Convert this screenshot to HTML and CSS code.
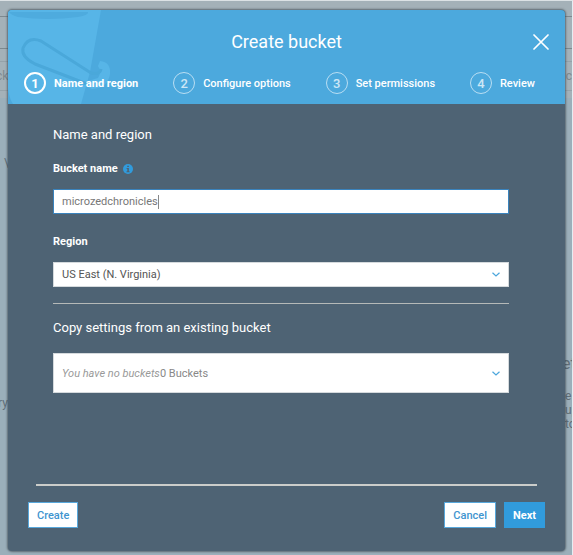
FILE: index.html
```html
<!DOCTYPE html>
<html lang="en">
  <head>
    <meta charset="UTF-8" />
    <meta name="viewport" content="width=device-width, initial-scale=1" />
    <title>Create bucket</title>
    <link rel="stylesheet" href="styles.css">
  </head>
  <body>
    <!-- dimmed console page behind the dialog -->
    <div class="backdrop" aria-hidden="true">
      <div class="backdrop-top">
        <div class="backdrop-nav"></div>
        <div class="backdrop-search"></div>
        <div class="backdrop-toolbar"><span>ck</span><span>uc</span></div>
      </div>
      <span class="peek peek-mark">\</span>
      <span class="peek peek-left">ry</span>
      <span class="peek peek-title">et</span>
      <span class="peek peek-text">e<br>up<br>to</span>
    </div>

    <main class="modal" role="dialog" aria-labelledby="modalTitle">
      <header class="modal-header">
        <svg class="bucket-art" viewBox="0 0 110 94" aria-hidden="true">
          <path d="M0 0H93L82 62L73 94H5Q1 88 0 78Z" fill="#57b5e7" />
          <path d="M1 2H80Q81 5 70 7Q40 11 10 7Q3 5 1 2Z" fill="#4eabde" />
          <path d="M92 51Q103 52 102 64Q100 78 84 79Q78 77 77 72L90 68Q94 62 90 56Z" fill="#57b5e7" />
          <path d="M79 74L27 54Q13 47 15 38Q20 26 33 31L83 63Q92 65 93 59" fill="none" stroke="#4aa8da" stroke-width="3" stroke-linejoin="round" />
        </svg>
        <div class="title-row">
          <h1 id="modalTitle">Create bucket</h1>
          <button type="button" class="close" aria-label="Close">
            <svg width="16" height="16" viewBox="0 0 16 16" aria-hidden="true">
              <path d="M1 1L15 15M15 1L1 15" fill="none" stroke="#fff" stroke-width="1.7" stroke-linecap="round" />
            </svg>
          </button>
        </div>
        <ol class="steps">
          <li class="step active"><span class="step-number">1</span>Name and region</li>
          <li class="step"><span class="step-number">2</span>Configure options</li>
          <li class="step"><span class="step-number">3</span>Set permissions</li>
          <li class="step"><span class="step-number">4</span>Review</li>
        </ol>
      </header>

      <form id="bucketForm" class="modal-body">
        <h2>Name and region</h2>
        <div class="field-label">
          <label for="bucketName">Bucket name</label>
          <svg width="10" height="10" viewBox="0 0 10 10" aria-hidden="true">
            <circle cx="5" cy="5" r="5" fill="#319bdc" />
            <path d="M4.2 1.7H5.9V3.1H4.2ZM3.6 4H5.9V7.2H6.6V8.2H3.5V7.2H4.3V5H3.6Z" fill="#4e6374" />
          </svg>
        </div>
        <div class="control control-focus">
          <input type="text" id="bucketName" name="bucketName" value="microzedchronicles" />
          <span class="caret"></span>
        </div>

        <div class="field-label">
          <label for="region">Region</label>
        </div>
        <div class="control">
          <select id="region" name="region">
            <option>US East (N. Virginia)</option>
          </select>
          <svg class="chevron" width="8" height="5" viewBox="0 0 8 5" aria-hidden="true">
            <path d="M.5 .7L4 4L7.5 .7" fill="none" stroke="#4ba6dc" stroke-width="1.2" />
          </svg>
        </div>

        <hr />

        <h2 id="copyTitle">Copy settings from an existing bucket</h2>
        <div class="control control-tall">
          <label class="empty-note" for="copyFrom">You have no buckets</label>
          <select id="copyFrom" name="copyFrom" aria-describedby="copyTitle">
            <option>0 Buckets</option>
          </select>
          <svg class="chevron" width="8" height="5" viewBox="0 0 8 5" aria-hidden="true">
            <path d="M.5 .7L4 4L7.5 .7" fill="none" stroke="#4ba6dc" stroke-width="1.2" />
          </svg>
        </div>
      </form>

      <footer class="modal-footer">
        <hr class="footer-rule" />
        <div class="footer-buttons">
          <button type="submit" form="bucketForm" class="btn">Create</button>
          <div class="footer-right">
            <button type="button" class="btn">Cancel</button>
            <button type="button" class="btn btn-primary">Next</button>
          </div>
        </div>
      </footer>
    </main>
  </body>
</html>
```

FILE: styles.css
```css
* {
  box-sizing: border-box;
}

body {
  margin: 0;
  padding: 10px 8px 4px;
  min-height: 100vh;
  display: flex;
  position: relative;
  font-family: Roboto, Arial, sans-serif;
  font-size: 11px;
  color: #fff;
}

.backdrop {
  position: absolute;
  inset: 0;
  overflow: hidden;
  background: #9bafba;
  border-top: 1px solid #dce2e5;
  border-right: 1px solid #e4edf2;
  color: #5f6e78;
  font-size: 12px;
}

.backdrop-top {
  height: 97px;
  background: #a4b1b8;
}

.backdrop-nav {
  height: 16px;
  border-bottom: 1px solid #7d898f;
}

.backdrop-search {
  height: 32px;
  border-bottom: 1px solid #7d898f;
}

.backdrop-toolbar {
  display: flex;
  justify-content: space-between;
  align-items: center;
  height: 30px;
  margin: 12px 0 0 -4px;
  border-top: 1px solid #95a2a9;
  border-bottom: 1px solid #95a2a9;
  color: #7d898f;
}

.peek {
  position: absolute;
  line-height: 14px;
}

.peek-mark {
  top: 155px;
  left: 4px;
}

.peek-left {
  top: 395px;
  left: -2px;
}

.peek-title {
  top: 356px;
  left: 562px;
  font-size: 16px;
}

.peek-text {
  top: 388px;
  left: 565px;
}

.modal {
  position: relative;
  flex: 1;
  display: flex;
  flex-direction: column;
  overflow: hidden;
  background: #4e6374;
  border-radius: 4px;
  box-shadow: 0 0 2px 1px rgba(50, 60, 68, 0.6);
}

.modal-header {
  position: relative;
  height: 94px;
  padding: 20px 16px 0;
  background: #4ca9dd;
}

.bucket-art {
  position: absolute;
  top: 0;
  left: 0;
  width: 110px;
  height: 94px;
}

.title-row {
  position: relative;
  display: grid;
  grid-template-columns: 16px 1fr 16px;
  align-items: center;
}

h1 {
  grid-column: 2;
  margin: 0;
  font-size: 18px;
  font-weight: 400;
  line-height: 24px;
  text-align: center;
}

.close {
  display: flex;
  padding: 0;
  border: none;
  background: none;
  cursor: pointer;
}

.steps {
  position: relative;
  display: flex;
  justify-content: space-between;
  margin: 18px 14px 0 0;
  padding: 0;
  list-style: none;
}

.step {
  display: flex;
  align-items: center;
  gap: 8px;
  font-weight: 500;
}

.step-number {
  display: flex;
  align-items: center;
  justify-content: center;
  width: 22px;
  height: 22px;
  border: 1px solid #b9def3;
  border-radius: 50%;
  color: #cde7f6;
  font-size: 13px;
}

.step.active {
  font-weight: 700;
}

.active .step-number {
  border: 2px solid #fff;
  color: #fff;
}

.modal-body {
  flex: 1;
  padding: 21px 56px 0 45px;
}

h2 {
  margin: 0;
  font-size: 13px;
  font-weight: 400;
  line-height: 20px;
}

.field-label {
  display: flex;
  align-items: center;
  gap: 5px;
  margin: 16px 0 12px;
  font-weight: 700;
  line-height: 16px;
}

.control {
  display: flex;
  align-items: center;
  height: 25px;
  padding: 0 8px;
  background: #fff;
  border: 1px solid #d5dadd;
  color: #555;
}

.control-focus {
  margin-bottom: 20px;
  border-color: #3a83bd;
}

.control-tall {
  height: 40px;
  color: #888;
}

.control input,
.control select {
  min-width: 0;
  padding: 0;
  border: none;
  outline: none;
  background: none;
  appearance: none;
  font: inherit;
  color: inherit;
}

.control input {
  field-sizing: content;
  color: #777;
}

.control select {
  flex: 1;
}

.caret {
  width: 1px;
  height: 14px;
  background: #888;
}

.chevron {
  flex: none;
}

.empty-note {
  font-style: italic;
  color: #999;
}

hr {
  margin: 16px 0 14px;
  border: none;
  border-top: 1px solid #b5b9b8;
}

#copyTitle {
  margin-bottom: 15px;
}

.modal-footer {
  padding: 0 20px 23px;
}

.footer-rule {
  margin: 0 8px 16px;
  border-top: 2px solid #cbcdca;
}

.footer-buttons {
  display: flex;
  justify-content: space-between;
}

.footer-right {
  display: flex;
  gap: 8px;
}

.btn {
  height: 26px;
  padding: 0 8px;
  background: #fff;
  border: 1px solid #58a8dc;
  font: inherit;
  font-weight: 500;
  color: #3f95cf;
  cursor: pointer;
}

.btn-primary {
  background: #319bdc;
  border-color: #319bdc;
  font-weight: 700;
  color: #fff;
}
```
